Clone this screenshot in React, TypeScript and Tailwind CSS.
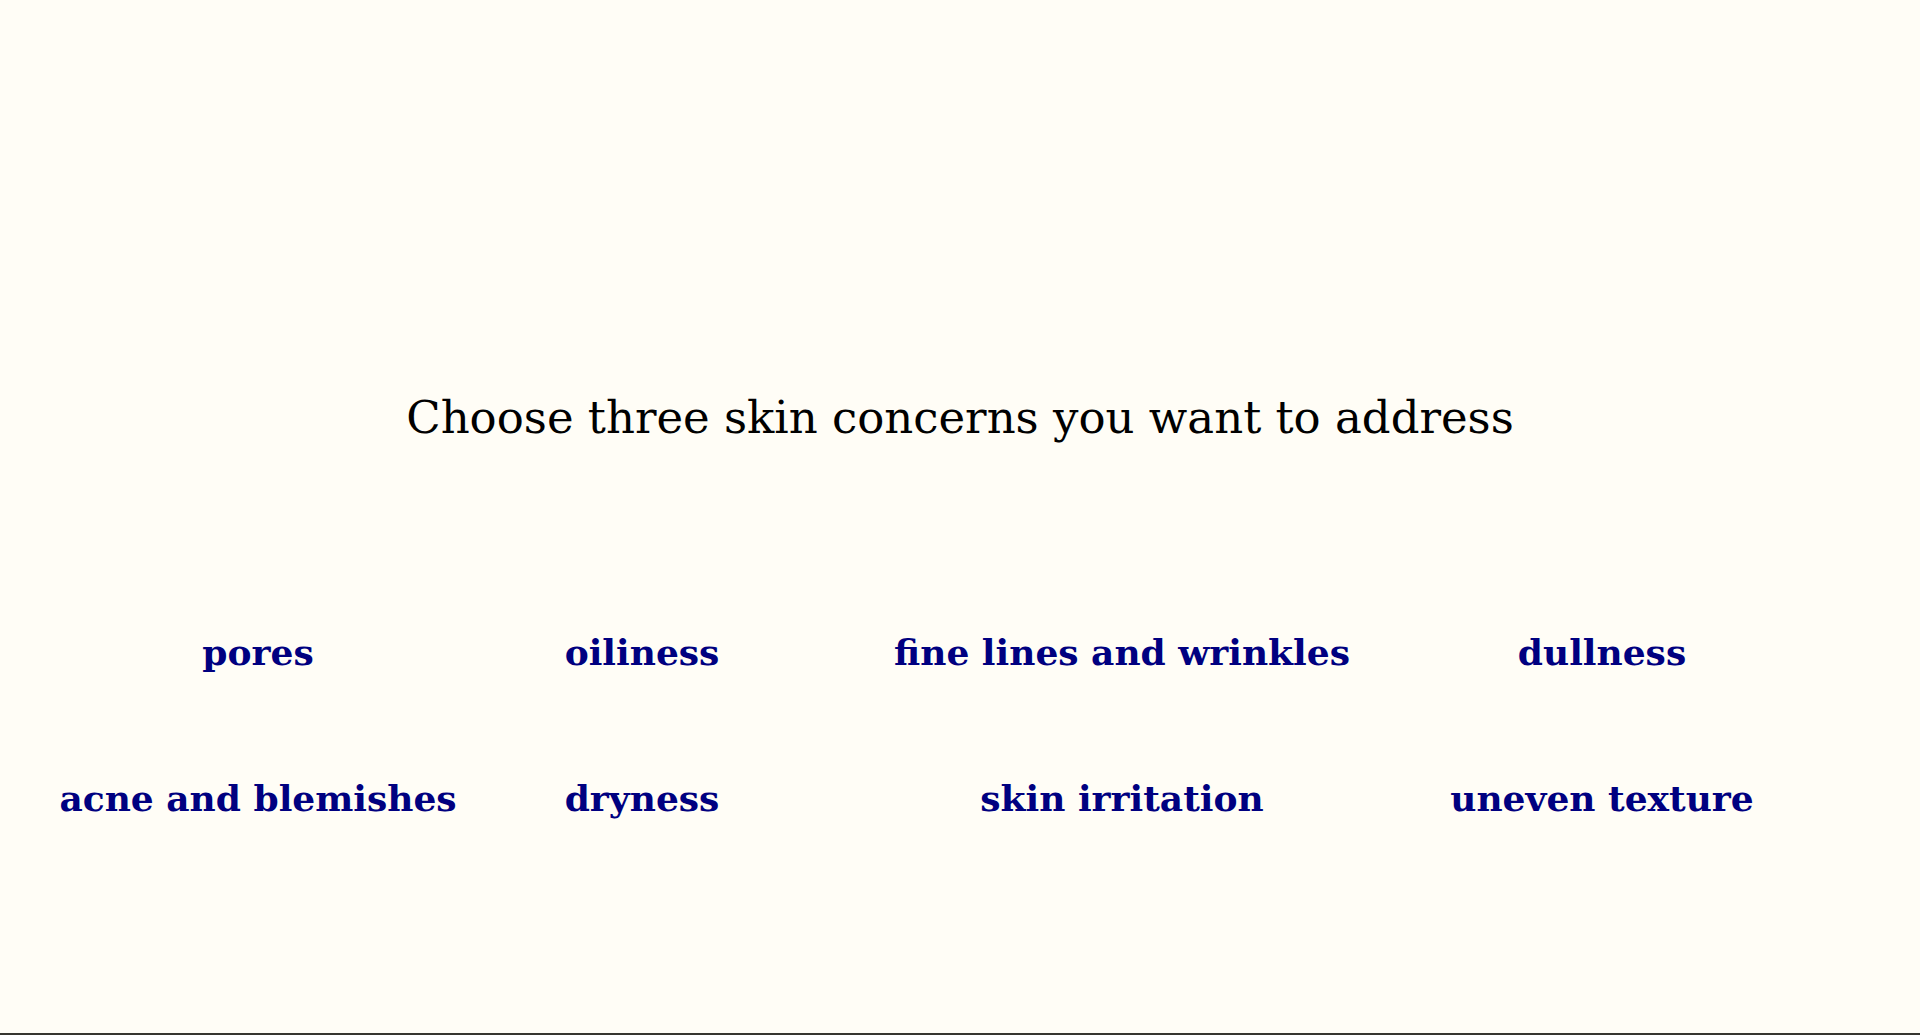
const concerns = [
  "pores",
  "oiliness",
  "fine lines and wrinkles",
  "dullness",
  "acne and blemishes",
  "dryness",
  "skin irritation",
  "uneven texture",
];

export default function App() {
  return (
    <div
      className="flex h-[1035px] w-full flex-col border-b-2 border-[#36352f] bg-[#fffdf6]"
      style={{ fontFamily: '"DejaVu Serif", "Liberation Serif", serif' }}
    >
      <h1 className="mt-[390px] text-center text-[45px] leading-[56px] font-normal text-black">
        Choose three skin concerns you want to address
      </h1>

      <div className="mt-[186px] grid grid-cols-[424px_344px_616px_344px] gap-y-[106px] pl-[46px]">
        {concerns.map((c) => (
          <button
            key={c}
            className="whitespace-nowrap text-center text-[36px] leading-[40px] font-bold text-[#000080]"
          >
            {c}
          </button>
        ))}
      </div>
    </div>
  );
}
